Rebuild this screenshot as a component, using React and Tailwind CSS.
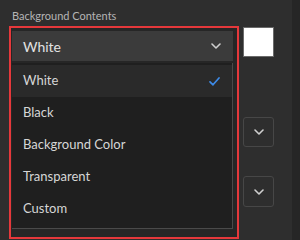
const options = ['White', 'Black', 'Background Color', 'Transparent', 'Custom'];

const Chevron = ({ className }) => (
  <svg className={className} width="10" height="6" viewBox="0 0 10 6" fill="none">
    <path d="M1 1l4 4 4-4" stroke="currentColor" strokeWidth="1.6" strokeLinecap="round" strokeLinejoin="round" />
  </svg>
);

const Check = () => (
  <svg width="11" height="9" viewBox="0 0 11 9" fill="none">
    <path d="M1 4.8l3 3L10 1" stroke="#3d8ae6" strokeWidth="1.7" strokeLinecap="round" strokeLinejoin="round" />
  </svg>
);

export default function App() {
  const selected = 'White';

  return (
    <div className="w-[300px] h-[240px] flex overflow-hidden bg-[#2e2e2e] font-['Lato',sans-serif]">
      <div className="w-[292px] pl-[9px] pt-[9px]">
        {/* Label */}
        <div className="pl-[3px] h-[17px] text-[11px] leading-[14px] text-[#b5b5b5]">Background Contents</div>

        <div className="flex items-start gap-[4px]">
          {/* Highlighted dropdown */}
          <div className="w-[230px] h-[213px] border-2 border-[#e5383b] bg-[#262626] pl-[1px] pr-[4px] pt-[3px]">
            <div className="h-[30px] bg-[#3b3b3b] flex items-center justify-between pl-[11px] pr-[12px]">
              <span className="text-[14px] text-[#e2e2e2]">{selected}</span>
              <Chevron className="text-[#cfcfcf]" />
            </div>
            <div className="mt-[2px] h-[166px] bg-[#1f1f1f] border-r border-b border-[#4a4a4a] pt-[2px]">
              {options.map((opt) => (
                <div
                  key={opt}
                  className={`h-[32px] flex items-center justify-between pl-[11px] pr-[12px] ${opt === selected ? 'bg-[#2a2a2a]' : ''}`}
                >
                  <span className="text-[13px] text-[#d6d6d6]">{opt}</span>
                  {opt === selected && <Check />}
                </div>
              ))}
            </div>
          </div>

          {/* Right column */}
          <div className="flex flex-col">
            <div className="mt-[1px] w-[31px] h-[30px] bg-white border border-[#6a6a6a]" />
            <div className="mt-[60px] w-[31px] h-[30px] rounded-[3px] border border-[#474747] flex items-center justify-center">
              <Chevron className="text-[#cfcfcf]" />
            </div>
            <div className="mt-[29px] w-[31px] h-[31px] rounded-[3px] border border-[#474747] flex items-center justify-center">
              <Chevron className="text-[#cfcfcf]" />
            </div>
          </div>
        </div>
      </div>
      <div className="flex-1 bg-[#262626]" />
    </div>
  );
}
